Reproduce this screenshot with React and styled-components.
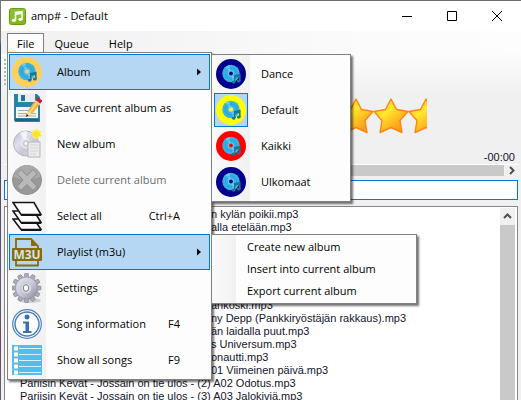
import React from 'react';
import styled, { createGlobalStyle } from 'styled-components';

const Global = createGlobalStyle`
  * { box-sizing: border-box; }
  body { margin: 0; background: #4d6077; overflow: hidden; }
  button, input { font: inherit; color: inherit; }
  ul { list-style: none; margin: 0; padding: 0; }
`;

const Desktop = styled.div`
  height: 100vh;
  padding-left: 1px;
  background: linear-gradient(#77767a 0 40px, #31546f 46px 100px, #4b4962 150px, #655a76 300px, #71455f 340px, #665e78);
  font: 11px/16px "Open Sans", "Noto Sans", sans-serif;
  color: #000;
`;

const Window = styled.main`
  height: 100%;
  display: flex;
  flex-direction: column;
  background: #f0f0f0;
  border-top: 1px solid #6c6a6c;
  overflow: hidden;
`;

const TitleBar = styled.header`
  flex: none;
  height: 30px;
  display: flex;
  align-items: center;
  gap: 5px;
  padding: 0 2px 0 8px;
  background: #fff;
`;

const Title = styled.h1`
  flex: 1;
  margin: 0;
  font-size: 11px;
  font-weight: 400;
`;

const CaptionButtons = styled.div`
  display: flex;
`;

const CaptionButton = styled.button`
  width: 45px;
  height: 28px;
  display: grid;
  place-items: center;
  padding: 0;
  border: 0;
  background: none;
`;

const MenuBar = styled.nav`
  flex: none;
  height: 23px;
  display: flex;
  padding: 2px 6px 0;
  background: linear-gradient(90deg, #f0f0f0, #fbfbfb 70%, #fdfdfd);
`;

const MenuRoot = styled.div`
  position: relative;
`;

const MenuButton = styled.button`
  height: 20px;
  padding: 0 9px;
  border: 1px solid ${(p) => (p.$open ? '#808080' : 'transparent')};
  border-bottom: 0;
  background: ${(p) => (p.$open ? '#fcfcfc' : 'none')};
  line-height: 18px;
`;

const Popup = styled.ul`
  position: absolute;
  z-index: 2;
  top: ${(p) => (p.$sub ? '0' : '19px')};
  left: ${(p) => (p.$sub ? 'calc(100% + 1px)' : '0')};
  width: ${(p) => p.$width}px;
  padding: 1px;
  border: 1px solid #808080;
  background: linear-gradient(90deg, #fafafa, #f1f1f1 ${(p) => p.$gutter}px, #fdfdfd ${(p) => p.$gutter}px);
  box-shadow: 2px 2px 2px rgba(0, 0, 0, 0.55);
`;

const Entry = styled.li`
  position: relative;
`;

const EntryButton = styled.button`
  width: 100%;
  height: ${(p) => (p.$small ? '22px' : '36px')};
  display: flex;
  align-items: center;
  padding: 0 ${(p) => (p.$shortcut ? '29px' : '8px')} 0 ${(p) => (p.$small ? '33px' : '2px')};
  border: 1px solid ${(p) => (p.$active ? '#0078d7' : 'transparent')};
  background: ${(p) => (p.$active ? '#b5d7f3' : 'none')};
  color: ${(p) => (p.disabled ? '#6d6d6d' : '#000')};
  text-align: left;
  white-space: nowrap;
`;

const IconBox = styled.span`
  flex: none;
  width: 34px;
  height: 34px;
  display: grid;
  place-items: center;
  margin: 0 13px 0 -2px;
  border: 1px solid ${(p) => (p.$checked ? '#0078d7' : 'transparent')};
  background: ${(p) => (p.$checked ? '#b5d7f3' : 'none')};
`;

const EntryLabel = styled.span`
  flex: 1;
`;

const ToolStrip = styled.div`
  flex: none;
  height: 42px;
  padding: 5px 3px;
  background: linear-gradient(#fcfcfc, #f0f0f0);
`;

const Grip = styled.div`
  width: 2px;
  height: 28px;
  background: repeating-linear-gradient(#b4b4b4 0 2px, transparent 2px 4px);
`;

const Player = styled.section`
  flex: none;
  height: 68px;
  display: flex;
  flex-direction: column;
  align-items: flex-end;
  justify-content: space-between;
  padding: 2px 6px 0 0;
`;

const Rating = styled.div`
  width: 175px;
  height: 36px;
  margin-right: 88px;
  overflow: hidden;
`;

const Remaining = styled.output`
  font: 11px/14px "Liberation Sans", Arial, sans-serif;
  color: #14142c;
`;

const HScroll = styled.div`
  flex: none;
  height: 12px;
  display: flex;
  margin: 0 2px 0 3px;
  border-top: 1px solid #fff;
`;

const ScrollButton = styled.button`
  flex: none;
  width: 15px;
  height: ${(p) => (p.$tall ? '17px' : '11px')};
  display: grid;
  place-items: center;
  padding: 0;
  border: 0;
  background: #f0f0f0;
`;

const Thumb = styled.div`
  flex: 1;
  background: #c9c9c9;
`;

const Search = styled.input`
  flex: none;
  height: 20px;
  margin: 4px 3px 0;
  border: 1px solid #0078d7;
  background: #fff;
  outline: 0;
`;

const ListBox = styled.div`
  flex: 1;
  min-height: 0;
  display: flex;
  margin: 6px 3px 0;
  padding: 1px 2px 0 1px;
  border: 1px solid #828790;
  border-bottom: 0;
  background: #fff;
`;

const Tracks = styled.ul`
  flex: 1;
  overflow: hidden;
  font: 11px/13px "Liberation Sans", Arial, sans-serif;
  color: #14142c;
`;

const Track = styled.li`
  height: 13px;
  padding-left: ${(p) => (p.$covered ? '205px' : '14px')};
  white-space: pre;
`;

const VScroll = styled.div`
  width: 15px;
  display: flex;
  flex-direction: column;
`;

function AppIcon() {
  return (
    <svg width="17" height="17" viewBox="0 0 17 17" aria-hidden="true">
      <rect x="0.5" y="0.5" width="16" height="16" rx="2" fill="#80b51f" stroke="#6a9e12" />
      <path d="M1 1h15v7L1 15z" fill="#93c437" opacity=".6" />
      <path d="M6.5 12V4.5L13 3.5v7.5M6.5 6.2 13 5.2" fill="none" stroke="#fff" strokeWidth="1.5" />
      <ellipse cx="5" cy="12.3" rx="2.1" ry="1.6" fill="#fff" />
      <ellipse cx="11.5" cy="11.3" rx="2.1" ry="1.6" fill="#fff" />
    </svg>
  );
}

function Disc({ ring }) {
  return (
    <svg width="30" height="30" viewBox="0 0 30 30" aria-hidden="true">
      <circle cx="15" cy="15" r="15" fill={ring} />
      <circle cx="15" cy="14.5" r="8.7" fill="#35b1e6" />
      <path d="M15 14.5 9.5 8A8.7 8.7 0 0 1 13.5 6zM15 14.5l6 6.2a8.7 8.7 0 0 1-4 2.3z" fill="#7dd3f5" opacity=".75" />
      <circle cx="15" cy="14.5" r="5.6" fill="none" stroke="#2594c9" strokeWidth=".6" />
      <circle cx="15" cy="14.5" r="3" fill="#66c8ee" />
      <circle cx="15" cy="14.5" r="1.9" fill={ring} />
      <path d="M18.8 23v-6.3l5-1v6.2M18.8 18l5-1" fill="none" stroke="#1b7595" strokeWidth="1.6" />
      <ellipse cx="17.7" cy="23.1" rx="1.9" ry="1.6" fill="#1b7595" />
      <ellipse cx="22.8" cy="22" rx="1.9" ry="1.6" fill="#1b7595" />
    </svg>
  );
}

function SaveIcon() {
  return (
    <svg width="30" height="30" viewBox="0 0 30 30" aria-hidden="true">
      <path d="M2 1h23l3 3v25H3l-1-2z" fill="#2b83aa" />
      <path d="M6 1h17v8H6z" fill="#e4edf2" />
      <path d="M9 2h4v6H9z" fill="#2b6f94" />
      <path d="M4 14h22v11H4z" fill="#f6f5ef" />
      <path d="M6 17.5h13M6 20.5h18M6 23h18" stroke="#a9adb0" />
      <path d="M3 26h24v2H3z" fill="#1d6081" />
      <path d="m14 24 1.5-6L23.5 7l5 3.5L20 21z" fill="#f2b23d" />
      <path d="m17.5 19.5 8-11" stroke="#ffd983" strokeWidth="1.5" />
      <path d="m14 24 1.5-6 4.5 3z" fill="#f7e2bd" />
      <path d="m14 24 .7-3 2 1.4z" fill="#222" />
      <path d="m23.5 7 2-3 5 3.5-2 3z" fill="#c8242c" />
      <path d="m22.8 8 5 3.5" stroke="#c9d2d6" strokeWidth="1.5" />
    </svg>
  );
}

function NewIcon() {
  return (
    <svg width="30" height="30" viewBox="0 0 30 30" aria-hidden="true">
      <defs>
        <linearGradient id="cd" x1="0" y1="0" x2="1" y2="1">
          <stop offset="0" stopColor="#b9bcc4" />
          <stop offset=".35" stopColor="#dedff0" />
          <stop offset=".6" stopColor="#c9c8da" />
          <stop offset="1" stopColor="#d8dcda" />
        </linearGradient>
      </defs>
      <circle cx="14" cy="14.5" r="12.5" fill="url(#cd)" stroke="#b4b6ba" />
      <path d="M14 14.5 8 4a12 12 0 0 1 7-2z" fill="#fff" opacity=".7" />
      <circle cx="14" cy="14.5" r="4.5" fill="#d4d5da" stroke="#f8f8f8" />
      <circle cx="14" cy="14.5" r="2" fill="#fff" stroke="#aaa" strokeWidth=".5" />
      <path d="M16 13h12v15H16z" fill="#ececec" stroke="#b5b5b5" />
      <path d="M18 16h8M18 19h8M18 22h8M18 25h6" stroke="#d2d2d2" />
      <circle cx="24.5" cy="5" r="5" fill="#fbf45a" opacity=".7" />
      <path d="m24.5 0 1.3 3.3L29 2l-1.5 3L30 7l-3.5.3-2 3-1.5-3-3.5-.5 2.5-2L20 1.5l3.5 1.3z" fill="#f6e722" />
    </svg>
  );
}

function DeleteIcon() {
  return (
    <svg width="30" height="30" viewBox="0 0 30 30" aria-hidden="true">
      <circle cx="15" cy="15" r="14.5" fill="#999" stroke="#8e8e8e" />
      <path d="M2 12a13 12 0 0 1 26 0q-13 5-26 0z" fill="#a9a9a9" />
      <path d="m5 8.5 4-4 6 6 6-6 4 4-6 6.5 6 6.5-4 4-6-6-6 6-4-4 6-6.5z" fill="#b9b9b9" stroke="#8a8a8a" />
    </svg>
  );
}

function StackIcon() {
  return (
    <svg width="30" height="30" viewBox="0 0 30 30" aria-hidden="true" fill="#fdfdfd" stroke="#151515" strokeWidth="1.6">
      <path d="M1 18h21l7 10.5H9z" />
      <path d="M1 10h21l7 11.5H9z" />
      <path d="M1 1.5h21l7 12H9z" />
      <path d="M9 14h20M9 22h20M9 29h20" strokeWidth="2" />
    </svg>
  );
}

const BadgeText = styled.text`
  font: 700 12px "Open Sans", sans-serif;
`;

function PlaylistIcon() {
  return (
    <svg width="30" height="30" viewBox="0 0 30 30" aria-hidden="true">
      <path d="M4 11V2h15l7 7v2M4 23v5.5h22V23" fill="none" stroke="#8a6b08" strokeWidth="1.8" />
      <path d="M19 2v7h7z" fill="#8a6b08" />
      <rect x="0" y="11" width="30" height="13" rx="1" fill="#8a6b08" />
      <BadgeText x="15" y="22" textAnchor="middle" fill="#d3e4ea">M3U</BadgeText>
    </svg>
  );
}

function GearIcon() {
  const teeth = Array.from({ length: 12 }, (_, i) => i * 30);
  return (
    <svg width="30" height="30" viewBox="0 0 30 30" aria-hidden="true">
      <defs>
        <linearGradient id="metal" x1="0" y1="0" x2="1" y2="1">
          <stop offset="0" stopColor="#e4e4f2" />
          <stop offset=".5" stopColor="#c9cbdb" />
          <stop offset="1" stopColor="#858990" />
        </linearGradient>
      </defs>
      <ellipse cx="18" cy="27.5" rx="11" ry="2.5" fill="#d0d0d0" />
      {teeth.map((a) => (
        <path key={a} d="m12 5 .8-4.5h3.4L17 5z" fill="#a9acb9" stroke="#7d818b" strokeWidth=".6" transform={`rotate(${a} 14.5 15)`} />
      ))}
      <circle cx="14.5" cy="15" r="11" fill="url(#metal)" stroke="#8b8f99" strokeWidth=".6" />
      <circle cx="14" cy="15" r="5.5" fill="#dfe0ea" stroke="#b3b6c0" strokeWidth=".7" />
      <ellipse cx="14" cy="15" rx="2.8" ry="3.4" fill="#fafafa" stroke="#75797f" />
    </svg>
  );
}

function InfoIcon() {
  return (
    <svg width="30" height="30" viewBox="0 0 30 30" aria-hidden="true">
      <circle cx="15" cy="15" r="14.3" fill="#fff" stroke="#4a80bd" strokeWidth="1.2" />
      <circle cx="15" cy="15" r="12" fill="#fff" stroke="#4a80bd" strokeWidth="1.5" />
      <circle cx="15" cy="8" r="2.5" fill="#3a70b0" />
      <path d="M11 12.5h6V22h2.5v2H11v-2h2.5v-7.5H11z" fill="#3a70b0" />
    </svg>
  );
}

function ListIcon() {
  return (
    <svg width="30" height="30" viewBox="0 0 30 30" aria-hidden="true">
      <path d="M0 0h30v30H0z" fill="#55bdeb" />
      <path d="M7 3.5h22M7 9.5h22M7 15.5h22M7 21.5h22M7 27.5h22" stroke="#d9f2fc" strokeWidth="1" />
      <path d="M2 1.5h4v4H2zM2 7.5h4v4H2zM2 13.5h4v4H2zM2 19.5h4v4H2zM2 25.5h4v4H2z" fill="#fff" />
    </svg>
  );
}

function Arrow() {
  return (
    <svg width="4" height="8" viewBox="0 0 4 8" aria-hidden="true">
      <path d="M0 0.5v7L4 4z" fill="#000" />
    </svg>
  );
}

function Chevron({ d }) {
  return (
    <svg width="9" height="9" viewBox="0 0 9 9" fill="none" stroke="#505050" strokeWidth="2" aria-hidden="true">
      <path d={d} />
    </svg>
  );
}

function Stars() {
  return (
    <svg width="175" height="36" viewBox="0 0 175 36" role="img" aria-label="Rating">
      <defs>
        <linearGradient id="gold" x1="0" y1="0" x2=".8" y2="1">
          <stop offset=".15" stopColor="#ffc414" />
          <stop offset=".42" stopColor="#ffe92e" />
          <stop offset=".62" stopColor="#ffc622" />
          <stop offset=".9" stopColor="#fa9d1c" />
        </linearGradient>
      </defs>
      {[34, 69, 104, 139, 174].map((x) => (
        <path
          key={x}
          transform={`translate(${x} 0)`}
          d="M0 1 5.5 11.5 17 13.5 9 22.5 11 34.5 0 29.5-11 34.5-9 22.5-17 13.5-5.500 11.500z"
          fill="url(#gold)"
          stroke="#ff8412"
          strokeWidth="1.4"
          strokeLinejoin="round"
        />
      ))}
    </svg>
  );
}

function Item({ icon, label, shortcut, active, checked, disabled, small, children }) {
  return (
    <Entry role="none">
      <EntryButton
        role="menuitem"
        $small={small}
        $active={active}
        $shortcut={shortcut}
        disabled={disabled}
        aria-haspopup={children ? 'menu' : undefined}
      >
        {icon && <IconBox $checked={checked}>{icon}</IconBox>}
        <EntryLabel>{label}</EntryLabel>
        {shortcut && <span>{shortcut}</span>}
        {children && <Arrow />}
      </EntryButton>
      {children}
    </Entry>
  );
}

const tracks = [
  [true, 'n kylän poikii.mp3'],
  [true, 'alla etelään.mp3'],
  [true, ''],
  [true, ''],
  [true, ''],
  [true, ''],
  [true, ''],
  [true, 'ankoski.mp3'],
  [true, 'ny Depp (Pankkiryöstäjän rakkaus).mp3'],
  [true, 'än laidalla puut.mp3'],
  [true, 's Universum.mp3'],
  [true, 'onautti.mp3'],
  [true, '01 Viimeinen päivä.mp3'],
  [false, 'Pariisin Kevät - Jossain on tie ulos - (2) A02 Odotus.mp3'],
  [false, 'Pariisin Kevät - Jossain on tie ulos - (3) A03 Jalokiviä.mp3'],
];

export default function App() {
  return (
    <Desktop>
      <Global />
      <Window>
        <TitleBar>
          <AppIcon />
          <Title>amp# - Default</Title>
          <CaptionButtons>
            <CaptionButton aria-label="Minimize">
              <svg width="10" height="10" aria-hidden="true"><path d="M0 5.5h10" stroke="#000" /></svg>
            </CaptionButton>
            <CaptionButton aria-label="Maximize">
              <svg width="10" height="10" aria-hidden="true"><path d="M.5.5h9v9h-9z" fill="none" stroke="#000" /></svg>
            </CaptionButton>
            <CaptionButton aria-label="Close">
              <svg width="10" height="10" aria-hidden="true"><path d="m0 0 10 10M10 0 0 10" stroke="#000" /></svg>
            </CaptionButton>
          </CaptionButtons>
        </TitleBar>
        <MenuBar aria-label="Main menu">
          <MenuRoot>
            <MenuButton $open aria-expanded="true">File</MenuButton>
            <Popup role="menu" $width={205} $gutter={38}>
              <Item icon={<Disc ring="#ffcf5c" />} label="Album" active>
                <Popup role="menu" $sub $width={140} $gutter={38}>
                  <Item icon={<Disc ring="#00008b" />} label="Dance" />
                  <Item icon={<Disc ring="#ffff00" />} label="Default" checked />
                  <Item icon={<Disc ring="#ff0000" />} label="Kaikki" />
                  <Item icon={<Disc ring="#00008b" />} label="Ulkomaat" />
                </Popup>
              </Item>
              <Item icon={<SaveIcon />} label="Save current album as" />
              <Item icon={<NewIcon />} label="New album" />
              <Item icon={<DeleteIcon />} label="Delete current album" disabled />
              <Item icon={<StackIcon />} label="Select all" shortcut="Ctrl+A" />
              <Item icon={<PlaylistIcon />} label="Playlist (m3u)" active>
                <Popup role="menu" $sub $width={206} $gutter={24}>
                  <Item small label="Create new album" />
                  <Item small label="Insert into current album" />
                  <Item small label="Export current album" />
                </Popup>
              </Item>
              <Item icon={<GearIcon />} label="Settings" />
              <Item icon={<InfoIcon />} label="Song information" shortcut="F4" />
              <Item icon={<ListIcon />} label="Show all songs" shortcut="F9" />
            </Popup>
          </MenuRoot>
          <MenuButton>Queue</MenuButton>
          <MenuButton>Help</MenuButton>
        </MenuBar>
        <ToolStrip><Grip /></ToolStrip>
        <Player>
          <Rating><Stars /></Rating>
          <Remaining>-00:00</Remaining>
        </Player>
        <HScroll>
          <ScrollButton aria-label="Scroll left"><Chevron d="M6 1 2.5 4.5 6 8" /></ScrollButton>
          <Thumb />
          <ScrollButton aria-label="Scroll right"><Chevron d="M3 1l3.5 3.5L3 8" /></ScrollButton>
        </HScroll>
        <Search type="text" aria-label="Search" />
        <ListBox>
          <Tracks>
            {tracks.map(([covered, name], i) => (
              <Track key={i} $covered={covered}>{name}</Track>
            ))}
          </Tracks>
          <VScroll>
            <ScrollButton $tall aria-label="Scroll up"><Chevron d="M1 6l3.5-3.5L8 6" /></ScrollButton>
            <Thumb />
          </VScroll>
        </ListBox>
      </Window>
    </Desktop>
  );
}
